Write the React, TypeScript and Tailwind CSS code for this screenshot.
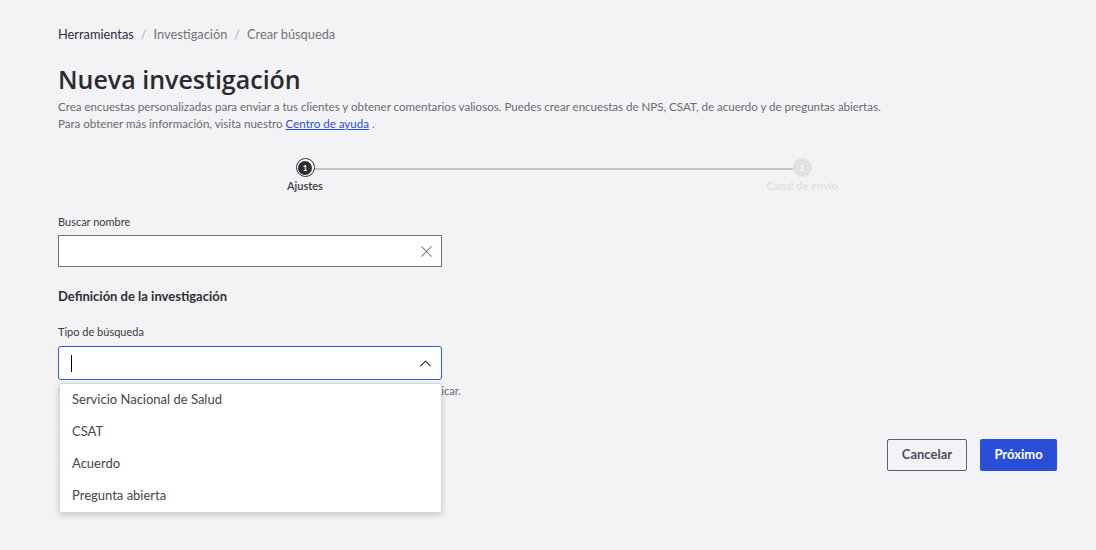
import { X, ChevronUp } from "lucide-react";

const OPTIONS = ["Servicio Nacional de Salud", "CSAT", "Acuerdo", "Pregunta abierta"];

function Stepper() {
  return (
    <div className="relative mt-[26px] h-[40px] w-full">
      <div className="absolute left-[247px] top-[10px] h-[2px] w-[497px] bg-[#c4c4c6]" />
      <div className="absolute left-[217px] top-0 flex w-[60px] flex-col items-center">
        <div className="flex h-[19px] w-[19px] items-center justify-center rounded-full border-[1.5px] border-[#2e2e33] bg-white">
          <div className="flex h-[14px] w-[14px] items-center justify-center rounded-full bg-[#2e2e33] text-[8px] font-bold leading-none text-white">
            1
          </div>
        </div>
        <span className="mt-[1px] text-[11px] font-semibold text-[#3a3a40]">Ajustes</span>
      </div>
      <div className="absolute left-[694px] top-0 flex w-[100px] flex-col items-center">
        <div className="flex h-[19px] w-[19px] items-center justify-center rounded-full bg-[#e2e2e4] text-[8px] font-bold leading-none text-white">
          2
        </div>
        <span className="mt-[1px] text-[11px] font-semibold text-[#e0e0e2]">Canal de envío</span>
      </div>
    </div>
  );
}

export default function App() {
  return (
    <div className="h-[550px] w-full overflow-hidden bg-[#f3f3f5] pl-[58px] pr-[39px] pt-[25px] font-['Lato',sans-serif] text-[#333]">
      <nav className="flex items-center gap-[7px] text-[12.8px] leading-[18px]">
        <span className="text-[#2b2f3a]">Herramientas</span>
        <span className="text-[#b0b0b6]">/</span>
        <span className="text-[#72737a]">Investigación</span>
        <span className="text-[#b0b0b6]">/</span>
        <span className="text-[#72737a]">Crear búsqueda</span>
      </nav>

      <h1 className="mt-[21px] font-['Open_Sans',sans-serif] text-[25px] font-semibold leading-[30px] text-[#2a2a30]">
        Nueva investigación
      </h1>
      <p className="mt-[4px] text-[11.55px] leading-[17px] text-[#6a6a72]">
        Crea encuestas personalizadas para enviar a tus clientes y obtener comentarios valiosos. Puedes crear encuestas de NPS, CSAT, de acuerdo y de preguntas abiertas.
        <br />
        Para obtener más información, visita nuestro{" "}
        <a href="#" className="text-[#2b4fd6] underline">
          Centro de ayuda
        </a>{" "}
        .
      </p>

      <Stepper />

      <div className="mt-[16px] w-[384px]">
        <label className="block text-[11px] leading-[16px] text-[#3a3a40]">Buscar nombre</label>
        <div className="mt-[5px] flex h-[32px] items-center justify-end border border-[#6f7280] bg-white pr-[5px]">
          <X className="h-[19px] w-[19px] text-[#8a8c96]" strokeWidth={1.4} />
        </div>

        <h2 className="mt-[20px] text-[13px] font-bold leading-[18px] text-[#2e2e33]">
          Definición de la investigación
        </h2>

        <label className="mt-[19px] block text-[11px] leading-[16px] text-[#3a3a40]">Tipo de búsqueda</label>
        <div className="relative mt-[6px]">
          <div className="flex h-[34px] items-center justify-between rounded-[3px] border-[1.5px] border-[#3457dc] bg-white pl-[12px] pr-[6px]">
            <div className="h-[17px] w-px bg-black" />
            <ChevronUp className="h-[19px] w-[19px] text-[#3a3a40]" strokeWidth={1.6} />
          </div>
          <p className="mt-[3px] whitespace-nowrap text-[11px] leading-[16px] text-[#6a6a72]">
            Selecciona el tipo de búsqueda que mejor se adapte a los datos que deseas publicar.
          </p>
          <ul className="absolute left-[1px] top-[37px] w-[383px] rounded-[3px] border border-[#d8d8dc] bg-white shadow-[0_2px_6px_rgba(0,0,0,0.18)]">
            {OPTIONS.map((o) => (
              <li key={o} className="flex h-[32px] items-center px-[12px] text-[13px] text-[#45454c]">
                {o}
              </li>
            ))}
          </ul>
        </div>
      </div>

      <div className="mt-[40px] flex justify-end gap-[13px]">
        <button className="h-[32px] w-[80px] rounded-[2px] border border-[#5a5e70] bg-transparent text-[13px] font-bold text-[#4a4e60]">
          Cancelar
        </button>
        <button className="h-[32px] w-[77px] rounded-[2px] bg-[#2a4fd6] text-[13px] font-bold text-white">
          Próximo
        </button>
      </div>
    </div>
  );
}
